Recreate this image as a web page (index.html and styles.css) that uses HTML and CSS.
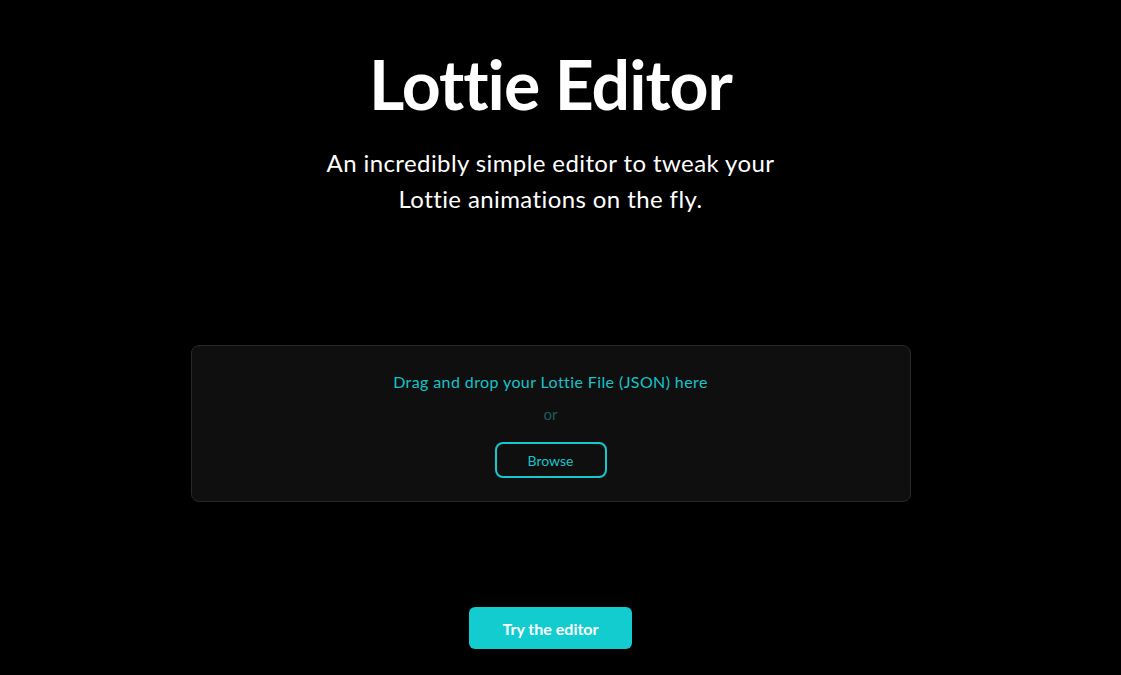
FILE: index.html
```html
<!DOCTYPE html>
<html lang="en">
<head>
<meta charset="utf-8">
<title>Lottie Editor</title>
<link rel="stylesheet" href="styles.css">
</head>
<body>
<main class="page">
  <header class="hero">
    <h1 class="title">Lottie Editor</h1>
    <p class="subtitle">An incredibly simple editor to tweak your<br>Lottie animations on the fly.</p>
  </header>
  <section class="dropzone">
    <p class="drop-text">Drag and drop your Lottie File (JSON) here</p>
    <p class="or">or</p>
    <button class="browse">Browse</button>
  </section>
  <button class="try">Try the editor</button>
</main>
</body>
</html>
```

FILE: styles.css
```css
html, body {
  margin: 0;
  background: #000;
}
body {
  font-family: "Lato", "Open Sans", sans-serif;
  color: #fff;
}
.page {
  display: flex;
  flex-direction: column;
  align-items: center;
  padding-top: 42px;
  padding-right: 20px;
}
.hero {
  text-align: center;
}
.title {
  margin: 0;
  font-size: 68px;
  line-height: 84px;
  font-weight: 700;
  letter-spacing: -1px;
}
.subtitle {
  margin: 19px 0 0;
  font-size: 24px;
  line-height: 36px;
  font-weight: 400;
  letter-spacing: 0.4px;
}
.dropzone {
  margin-top: 128px;
  width: 720px;
  height: 157px;
  box-sizing: border-box;
  background: #0f0f0f;
  border: 1px solid #26282b;
  border-radius: 8px;
  display: flex;
  flex-direction: column;
  align-items: center;
  padding-top: 26px;
}
.drop-text {
  margin: 0;
  font-size: 16px;
  line-height: 20px;
  color: #15c3c9;
  letter-spacing: 0.4px;
}
.or {
  margin: 12px 0 0;
  font-size: 15px;
  line-height: 20px;
  color: #1d5c5d;
}
.browse {
  margin-top: 18px;
  width: 112px;
  height: 36px;
  background: transparent;
  border: 2px solid #14c8cd;
  border-radius: 8px;
  color: #17c3c9;
  font-family: inherit;
  font-size: 14px;
  cursor: pointer;
}
.try {
  margin-top: 105px;
  width: 163px;
  height: 42px;
  background: #12cccf;
  border: none;
  border-radius: 6px;
  color: #fff;
  font-family: inherit;
  font-weight: 700;
  font-size: 16px;
  cursor: pointer;
}
```
